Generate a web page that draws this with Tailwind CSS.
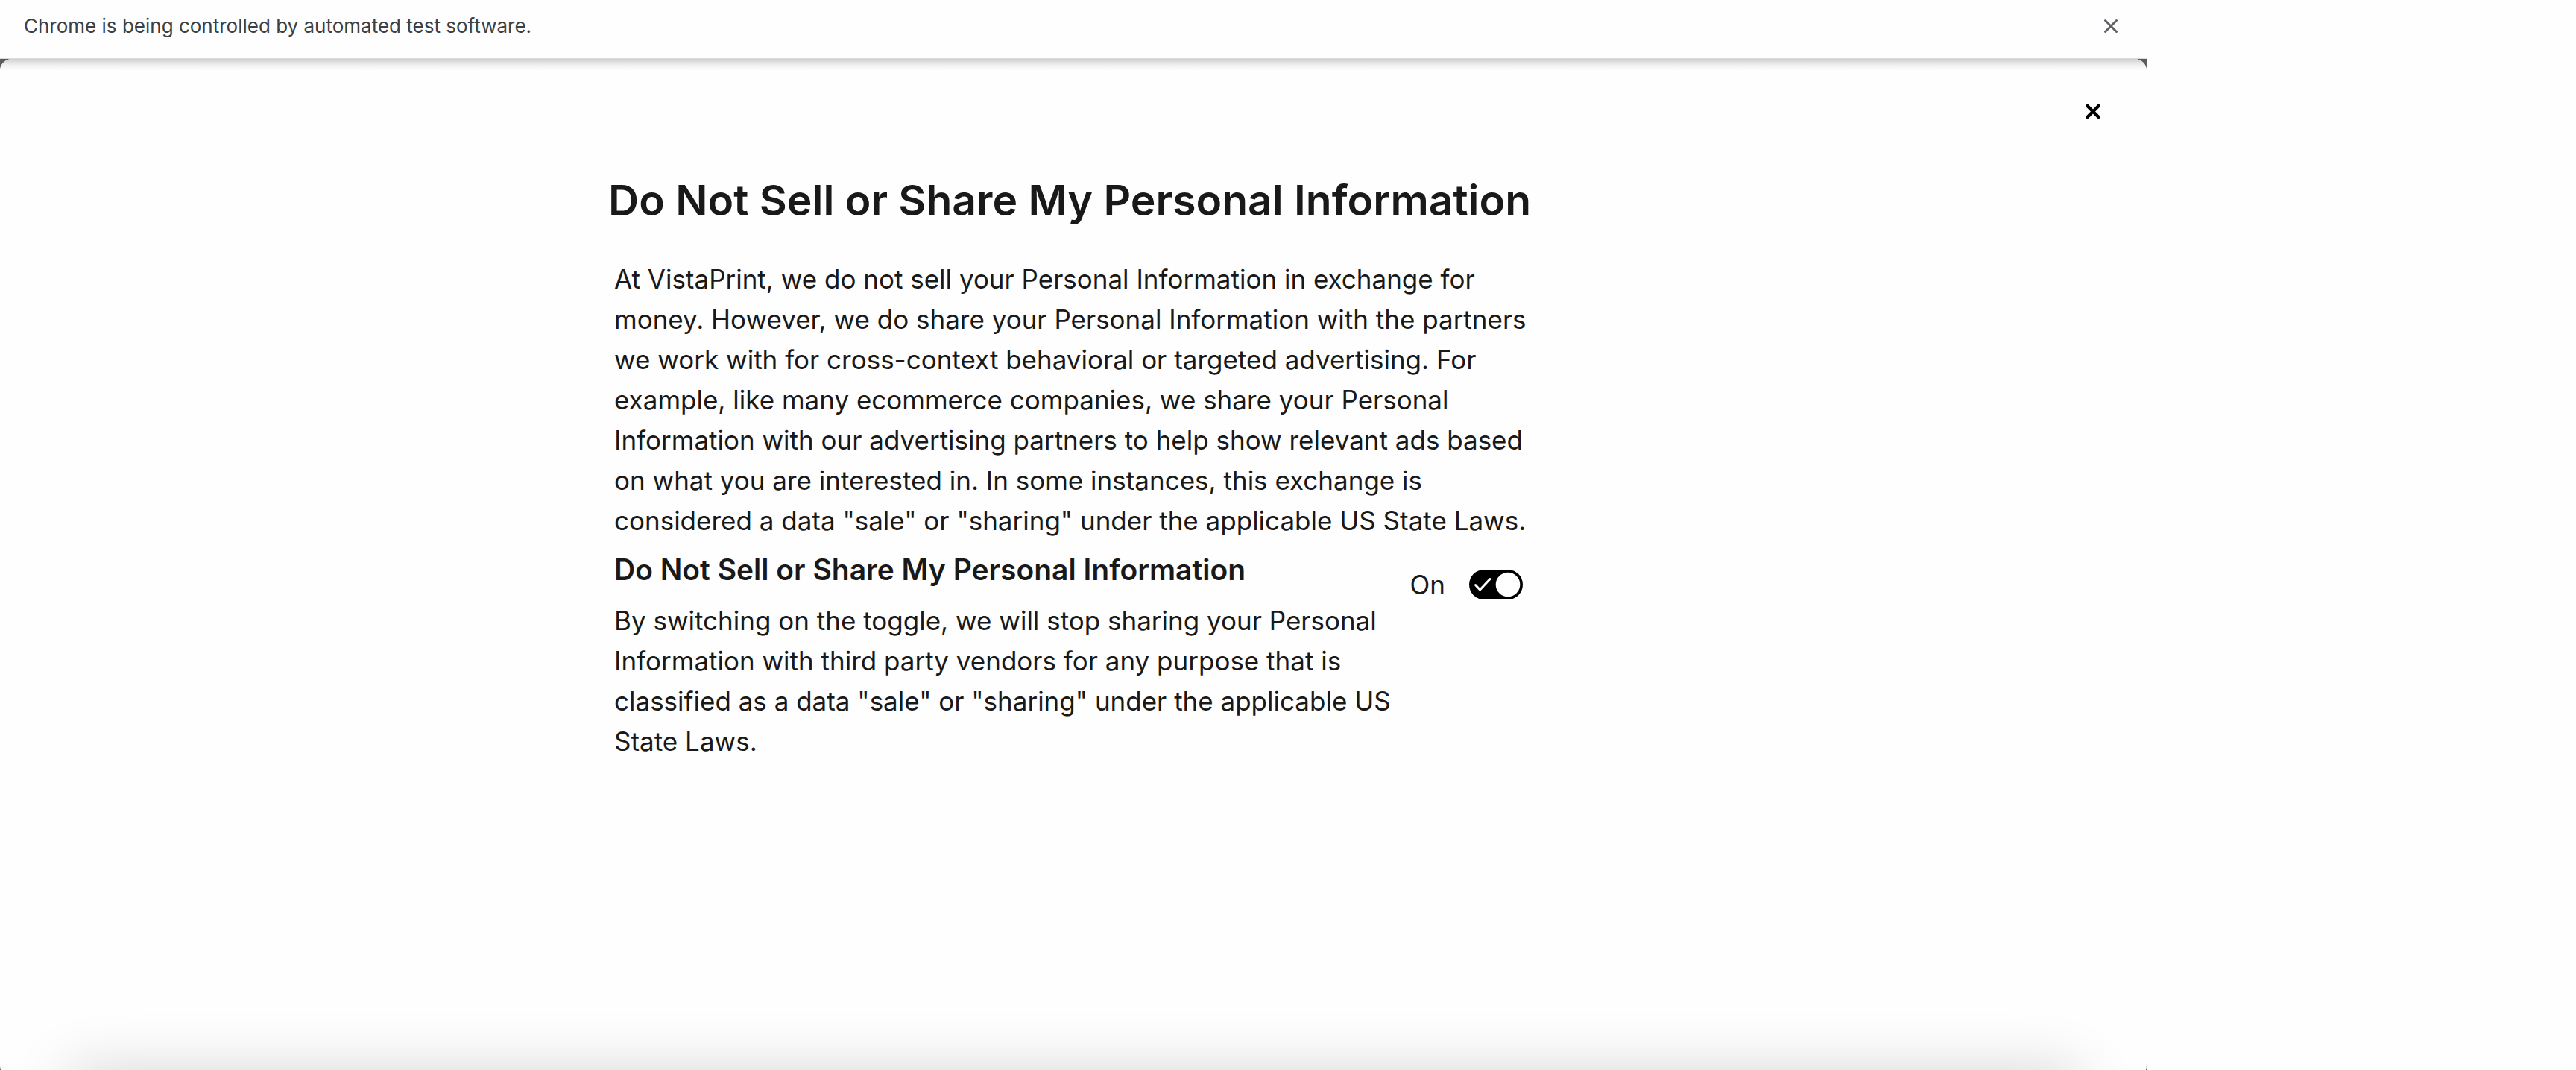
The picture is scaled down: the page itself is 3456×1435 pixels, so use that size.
<!DOCTYPE html>
<html lang="en">
<head>
<meta charset="utf-8">
<title>Do Not Sell or Share My Personal Information</title>
<script src="https://cdn.jsdelivr.net/npm/@tailwindcss/browser@4"></script>
</head>
<body class="bg-[#fefefe] font-[Inter,sans-serif] text-[#191919]">
<div class="w-5/6 h-screen flex flex-col overflow-hidden">
  <header class="relative z-10 flex h-[79px] shrink-0 items-center justify-between border-b border-[#dcdcdc] bg-[#fefefe] pl-8 pr-8 pb-2">
    <p class="text-[26px] leading-8 text-[#3c4043]">Chrome is being controlled by automated test software.</p>
    <button type="button" aria-label="Dismiss" class="size-8 text-[#5f6368]">
      <svg viewBox="0 0 32 32" class="size-8" fill="none" stroke="currentColor" stroke-width="3" stroke-linecap="round"><path d="M8.5 8.5l15 15M23.5 8.5l-15 15"/></svg>
    </button>
  </header>
  <div class="flex grow bg-[#5c5c5c]">
    <main class="relative -mb-2.5 grow overflow-hidden rounded-2xl bg-[#fefefe]">
      <div class="absolute inset-x-0 top-0 h-4 bg-linear-to-b from-[#cdcfcd] via-[#eff0ef] to-[#fefefe]"></div>
      <div class="flex justify-end pt-[54px] pr-14">
        <button type="button" aria-label="Close" class="size-8 text-black">
          <svg viewBox="0 0 32 32" class="size-8" fill="none" stroke="currentColor" stroke-width="4.500" stroke-linecap="round"><path d="M8.500 9l15 15M23.500 9l-15 15"/></svg>
        </button>
      </div>
      <section class="mx-auto w-[1248px] max-w-full pt-[68px]">
        <h1 class="whitespace-nowrap text-[57px] font-semibold leading-[72px]">Do Not Sell or Share My Personal Information</h1>
        <div class="px-2 pt-[42px] text-[35px] leading-[54px]">
          <p class="whitespace-nowrap">At VistaPrint, we do not sell your Personal Information in exchange for<br>money. However, we do share your Personal Information with the partners<br>we work with for cross-context behavioral or targeted advertising. For<br>example, like many ecommerce companies, we share your Personal<br>Information with our advertising partners to help show relevant ads based<br>on what you are interested in. In some instances, this exchange is<br>considered a data "sale" or "sharing" under the applicable US State Laws.</p>
          <div class="flex items-start justify-between pt-3 pr-[13px]">
            <div>
              <h2 class="whitespace-nowrap text-[39px] font-semibold leading-[54px]">Do Not Sell or Share My Personal Information</h2>
              <p class="whitespace-nowrap pt-3.5">By switching on the toggle, we will stop sharing your Personal<br>Information with third party vendors for any purpose that is<br>classified as a data "sale" or "sharing" under the applicable US<br>State Laws.</p>
            </div>
            <label class="flex items-center gap-8 pt-5">
              <span>On</span>
              <span class="relative block h-10 w-[72px]">
                <input type="checkbox" role="switch" checked class="block h-10 w-[72px] appearance-none rounded-full bg-black">
                <svg viewBox="0 0 72 40" class="pointer-events-none absolute inset-0" fill="none"><path d="M8.5 20.5l6 6.500L28 12.500" stroke="#fff" stroke-width="3" stroke-linecap="round" stroke-linejoin="round"/><circle cx="52" cy="20" r="16.300" fill="#fff"/></svg>
              </span>
            </label>
          </div>
        </div>
      </section>
      <div class="absolute inset-x-[90px] -bottom-20 h-[90px] rounded-2xl shadow-[0_0_80px_0_rgba(0,0,0,0.16)]"></div>
    </main>
  </div>
</div>
</body>
</html>
